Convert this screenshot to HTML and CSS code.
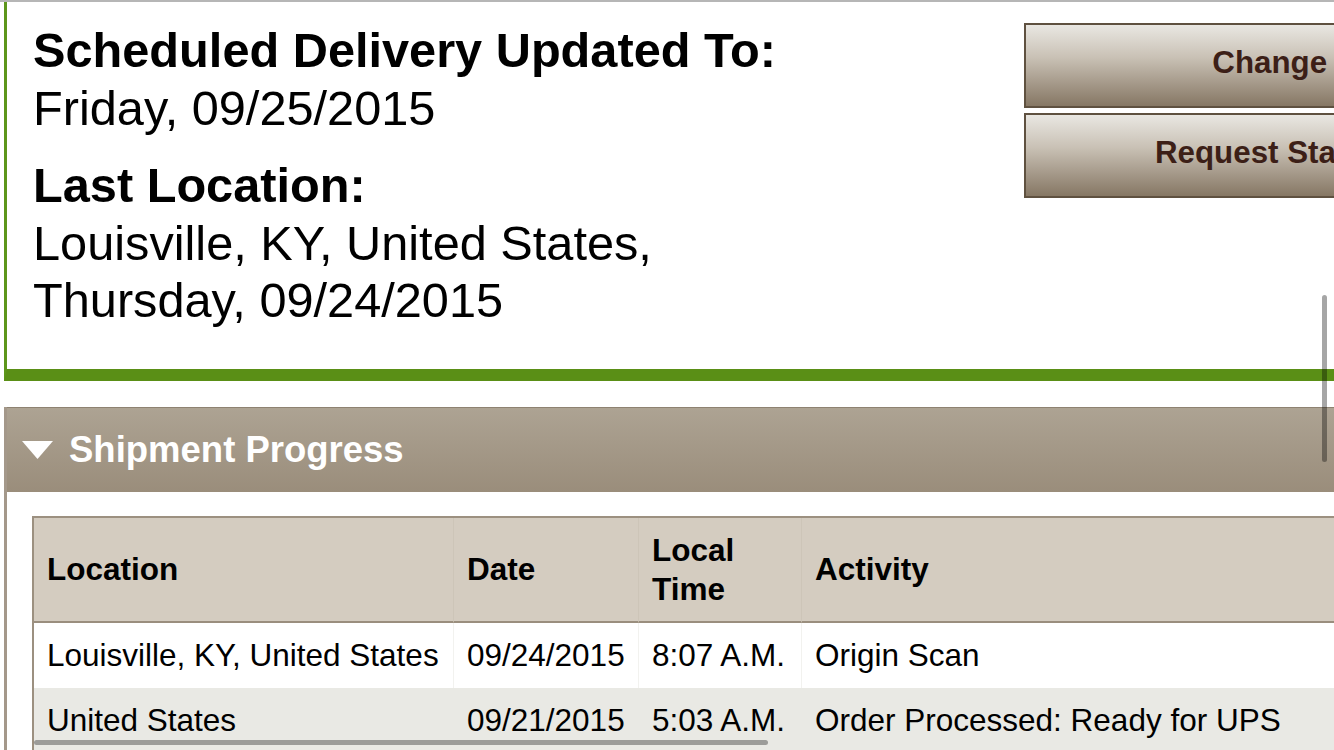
FILE: index.html
```html
<!DOCTYPE html>
<html lang="en">
<head>
  <meta charset="UTF-8" />
  <title>Tracking Details</title>
  <link rel="stylesheet" href="styles.css">
</head>
<body>
  <div class="page">
    <div class="topline"></div>

    <!-- Delivery summary -->
    <section class="summary">
      <div class="summary-info">
        <h2>Scheduled Delivery Updated To:</h2>
        <p>Friday, 09/25/2015</p>
        <h2 class="spaced">Last Location:</h2>
        <p>Louisville, KY, United States,<br>Thursday, 09/24/2015</p>
      </div>
      <div class="summary-actions">
        <button class="btn">Change Delivery</button>
        <button class="btn">Request Status Updates</button>
      </div>
    </section>

    <!-- Shipment progress -->
    <section class="progress">
      <div class="progress-head">
        <svg class="caret" viewBox="0 0 31 18">
          <polygon points="0,0 31,0 15.5,18" />
        </svg>
        <h3>Shipment Progress</h3>
      </div>
      <div class="progress-body">
        <div class="table-wrap">
          <table>
            <colgroup>
              <col class="col-location">
              <col class="col-date">
              <col class="col-time">
              <col>
            </colgroup>
            <thead>
              <tr>
                <th>Location</th>
                <th>Date</th>
                <th>Local Time</th>
                <th>Activity</th>
              </tr>
            </thead>
            <tbody>
              <tr>
                <td>Louisville, KY, United States</td>
                <td>09/24/2015</td>
                <td>8:07 A.M.</td>
                <td>Origin Scan</td>
              </tr>
              <tr>
                <td>United States</td>
                <td>09/21/2015</td>
                <td>5:03 A.M.</td>
                <td>Order Processed: Ready for UPS</td>
              </tr>
            </tbody>
          </table>
          <div class="hscroll"></div>
        </div>
      </div>
    </section>
  </div>

  <div class="vscroll"></div>
</body>
</html>
```

FILE: styles.css
```css
* {
  box-sizing: border-box;
}

html,
body {
  overflow: hidden;
}

body {
  margin: 0;
  padding: 0;
  background: #fff;
  font-family: "Liberation Sans", Arial, sans-serif;
  color: #000;
  height: 750px;
}

.page {
  width: 1680px;
}

.topline {
  height: 2px;
  background: #b6b6b6;
}

.summary {
  display: grid;
  grid-template-columns: 1fr 622px;
  margin-left: 4px;
  border-left: 3px solid #5d961b;
  border-bottom: 12px solid #5a8f16;
  padding: 20px 34px 39px 26px;
}

.summary h2 {
  margin: 0;
  font-size: 48.7px;
  line-height: 57.6px;
  font-weight: bold;
}

.summary h2.spaced {
  margin-top: 20px;
}

.summary p {
  margin: 0;
  font-size: 48.7px;
  line-height: 57.6px;
}

.summary-actions {
  display: flex;
  flex-direction: column;
  gap: 5px;
  margin-top: 1px;
}

.btn {
  height: 85px;
  padding: 19px 0 25px;
  border: 2px solid #5f5140;
  background: linear-gradient(#e9e7e2 0%, #c9c1b5 40%, #867764 100%);
  font-family: "Liberation Sans", Arial, sans-serif;
  font-size: 31.3px;
  line-height: 37px;
  font-weight: bold;
  color: #3c1f17;
  text-align: center;
  cursor: pointer;
}

.progress {
  margin-top: 26px;
  margin-left: 4px;
  border-left: 3px solid #a4988a;
}

.progress-head {
  display: flex;
  align-items: center;
  gap: 16px;
  height: 85px;
  padding-left: 15px;
  border-top: 1px solid #8e8271;
  background: linear-gradient(#ada393, #9a8d7b);
}

.caret {
  width: 31px;
  height: 18px;
  fill: #fff;
}

.progress-head h3 {
  margin: 0;
  font-size: 36.5px;
  font-weight: bold;
  color: #fff;
}

.progress-body {
  padding: 24px 0 0 25px;
}

.table-wrap {
  position: relative;
}

table {
  width: 1620px;
  table-layout: fixed;
  border-collapse: separate;
  border-spacing: 0;
  border-top: 2px solid #9c9080;
  border-left: 2px solid #9c9080;
  font-size: 31.5px;
  line-height: 38.75px;
}

.col-location {
  width: 419px;
}

.col-date {
  width: 185px;
}

.col-time {
  width: 163px;
}

th {
  padding: 13px 13px;
  background: #d4ccc0;
  border-bottom: 2px solid #9a8e7e;
  text-align: left;
  font-weight: bold;
  vertical-align: middle;
}

td {
  padding: 13px 13px;
  white-space: nowrap;
  vertical-align: middle;
}

th + th {
  border-left: 1px solid #cdc5b8;
}

td + td {
  border-left: 1px solid #f2f2ef;
}

tbody tr:nth-child(even) td {
  background: #e9e9e4;
  border-left-color: #e9e9e4;
}

/* iOS style scroll indicators */
.hscroll {
  position: absolute;
  left: 2px;
  top: 224px;
  width: 734px;
  height: 5px;
  border-radius: 3px;
  background: rgba(0, 0, 0, 0.33);
}

.vscroll {
  position: fixed;
  right: 7px;
  top: 295px;
  width: 5px;
  height: 167px;
  border-radius: 3px;
  background: rgba(0, 0, 0, 0.35);
}
```
